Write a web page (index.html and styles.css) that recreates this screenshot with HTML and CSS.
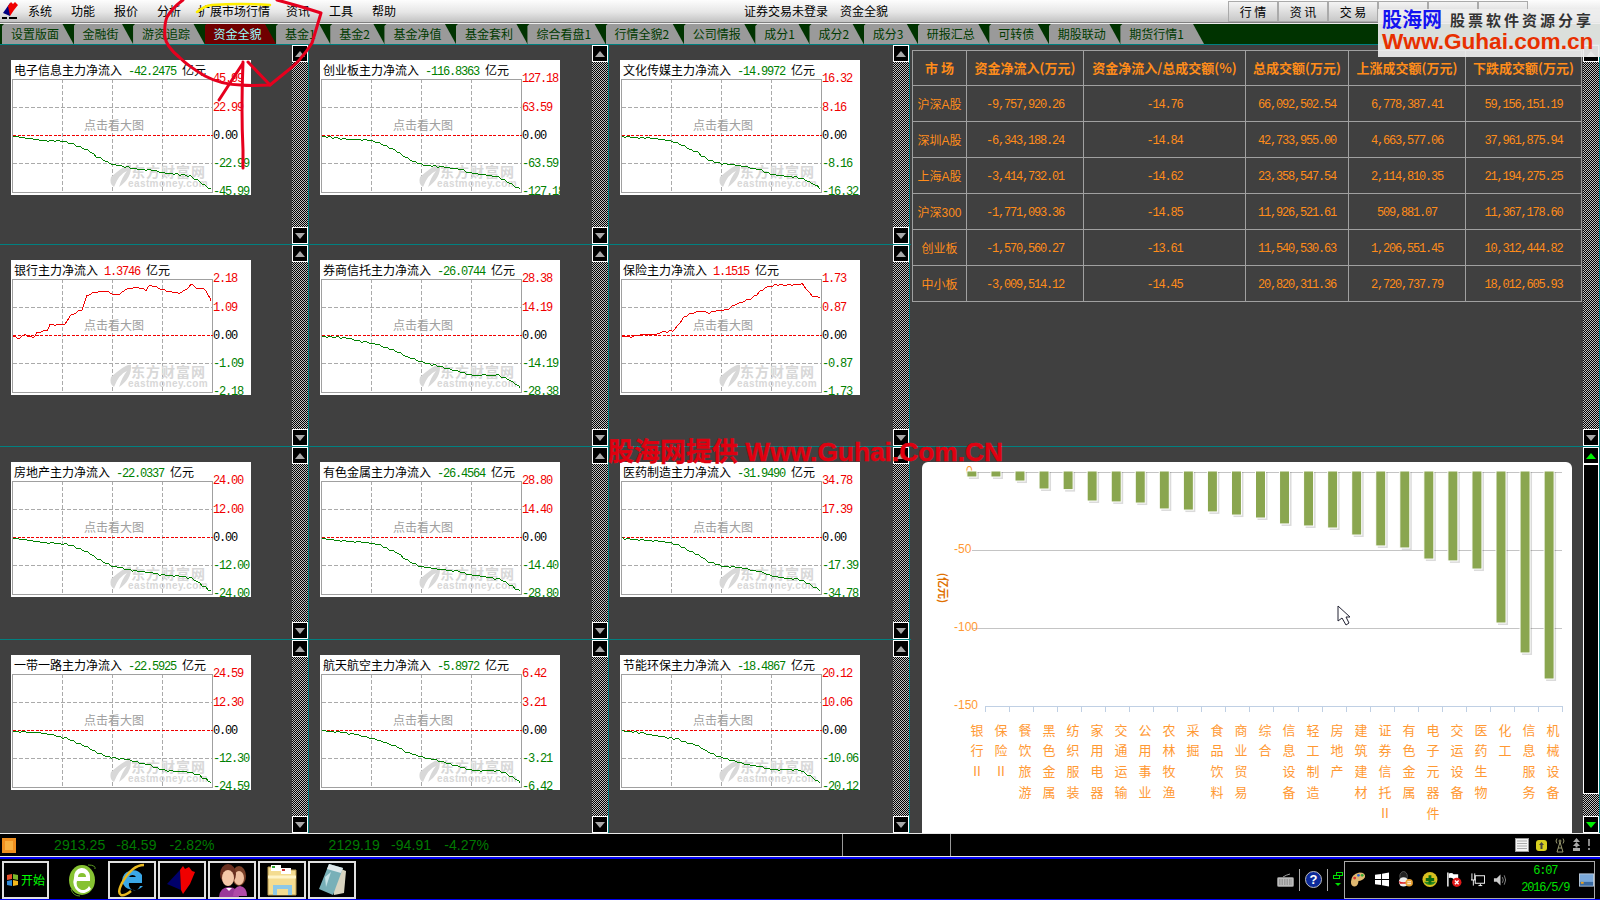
FILE: index.html
```html
<!DOCTYPE html>
<html lang="zh-CN">
<head>
    <meta charset="UTF-8">
    <title>资金全貌</title>
    <link rel="stylesheet" href="styles.css">
</head>
<body>
    <div class="menubar">
        <svg class="app-logo" width="18" height="20" viewBox="0 0 18 20">
            <path d="M9 2 L2 12 L9 15 Z" fill="#000080"/>
            <path d="M7 5 L10 1 L12 3 L14 1 L17 4 L13 9 L9 15 Z" fill="#f00000"/>
            <rect x="1" y="16" width="5" height="2" fill="#000"/>
            <rect x="8" y="16" width="8" height="2" fill="#000"/>
        </svg>
        <nav class="menu">
            <span>系统</span><span>功能</span><span>报价</span><span>分析</span><span class="menu-wide">扩展市场行情</span><span>资讯</span><span>工具</span><span>帮助</span>
        </nav>
        <div class="window-title"><span>证券交易未登录</span><span>资金全貌</span></div>
        <div class="top-buttons">
            <button>行 情</button><button>资 讯</button><button>交 易</button><button></button><button></button><button></button>
        </div>
    </div>

    <div class="tabbar">
        <span class="tab">设置版面</span>
        <span class="tab">金融街</span>
        <span class="tab">游资追踪</span>
        <span class="tab active">资金全貌</span>
        <span class="tab">基金1</span>
        <span class="tab">基金2</span>
        <span class="tab">基金净值</span>
        <span class="tab">基金套利</span>
        <span class="tab">综合看盘1</span>
        <span class="tab">行情全貌2</span>
        <span class="tab">公司情报</span>
        <span class="tab">成分1</span>
        <span class="tab">成分2</span>
        <span class="tab">成分3</span>
        <span class="tab">研报汇总</span>
        <span class="tab">可转债</span>
        <span class="tab">期股联动</span>
        <span class="tab tab-last">期货行情1</span>
    </div>

    <div class="main">
        <div class="panels" id="panels"></div>

        <div class="right">
            <div class="upper">
                <table class="market-table">
                    <thead>
                        <tr>
                            <th class="c1">市 场</th>
                            <th class="c2">资金净流入(万元)</th>
                            <th class="c3">资金净流入/总成交额(%)</th>
                            <th class="c4">总成交额(万元)</th>
                            <th class="c5">上涨成交额(万元)</th>
                            <th class="c6">下跌成交额(万元)</th>
                        </tr>
                    </thead>
                    <tbody>
                        <tr><td class="name">沪深A股</td><td>-9,757,920.26</td><td>-14.76</td><td>66,092,502.54</td><td>6,778,387.41</td><td>59,156,151.19</td></tr>
                        <tr><td class="name">深圳A股</td><td>-6,343,188.24</td><td>-14.84</td><td>42,733,955.00</td><td>4,663,577.06</td><td>37,961,875.94</td></tr>
                        <tr><td class="name">上海A股</td><td>-3,414,732.01</td><td>-14.62</td><td>23,358,547.54</td><td>2,114,810.35</td><td>21,194,275.25</td></tr>
                        <tr><td class="name">沪深300</td><td>-1,771,093.36</td><td>-14.85</td><td>11,926,521.61</td><td>509,881.07</td><td>11,367,178.60</td></tr>
                        <tr><td class="name">创业板</td><td>-1,570,560.27</td><td>-13.61</td><td>11,540,530.63</td><td>1,206,551.45</td><td>10,312,444.82</td></tr>
                        <tr><td class="name">中小板</td><td>-3,009,514.12</td><td>-14.45</td><td>20,820,311.36</td><td>2,720,737.79</td><td>18,012,605.93</td></tr>
                    </tbody>
                </table>
                <div class="scroll">
                    <div class="scroll-btn up"></div>
                    <div class="scroll-btn down"></div>
                </div>
            </div>
            <div class="lower">
                <div class="bar-chart">
                    <svg id="barChart" width="650" height="371" viewBox="922 462 650 371"></svg>
                </div>
                <div class="scroll scroll-green">
                    <div class="scroll-btn up"></div>
                    <div class="thumb"></div>
                    <div class="scroll-btn down"></div>
                </div>
            </div>
        </div>
    </div>

    <div class="statusbar">
        <span class="status-icon"></span>
        <span class="quote q1">2913.25</span><span class="quote q2">-84.59</span><span class="quote q3">-2.82%</span>
        <span class="quote q4">2129.19</span><span class="quote q2">-94.91</span><span class="quote q3">-4.27%</span>
        <span class="status-sep s1"></span>
        <span class="status-sep s2"></span>
        <div class="status-icons">
            <svg width="14" height="14" viewBox="0 0 14 14"><rect x="0.5" y="0.5" width="13" height="13" fill="#f4f4f4" stroke="#999"/><path d="M2 3h10M2 5.5h10M2 8h10M2 10.5h10" stroke="#aaa"/></svg>
            <svg width="13" height="13" viewBox="0 0 13 13"><rect x="1" y="1" width="11" height="11" rx="3" fill="#d8d020"/><path d="M6.500 3 L9 6 H7.500 V10 H5.500 V6 H4 Z" fill="#444"/></svg>
            <svg width="12" height="16" viewBox="0 0 12 16" fill="none" stroke="#9a9a70"><path d="M6 5 L3 15 H9 Z M4 11 H8"/><circle cx="6" cy="4" r="1"/><path d="M3 1.500 Q1 4 3 6.500 M9 1.500 Q11 4 9 6.500"/></svg>
            <svg width="9" height="14" viewBox="0 0 9 14"><path d="M4.500 0 L8 4 H1 Z M4.500 4 L8 8 H1 Z M3.500 8 H5.500 V9.500 H3.500 Z M1 10 H8 V13 H1 Z" fill="#aaa"/></svg>
            <svg width="4" height="14" viewBox="0 0 4 14"><path d="M1 1 H3 V8 H1 Z M1 10 H3 V12 H1 Z" fill="#888"/></svg>
        </div>
    </div>

    <div class="taskbar">
        <div class="task-btn start">
            <svg width="13" height="14" viewBox="0 0 13 14"><path d="M1 2 L6 1 V6 L1 7 Z" fill="#e8502a"/><path d="M7 1 L12 2 V7 L7 6 Z" fill="#7cb92c"/><path d="M1 8 L6 7 V13 L1 12 Z" fill="#2f8ad8"/><path d="M7 7 L12 8 V12 L7 13 Z" fill="#f4b81c"/></svg>
            <span>开始</span>
        </div>
        <div class="task-icon">
            <svg width="29" height="34" viewBox="0 0 29 34"><ellipse cx="14" cy="17" rx="13" ry="15" fill="#86c232"/><path d="M6 15 A8 9 0 0 1 22 13 V18 H9 A6 6 0 0 0 21 23 L23 26 A10 11 0 0 1 6 15 Z M10 14 H18 A4 4 0 0 0 10 14 Z" fill="#fff"/><path d="M20 2 Q28 2 27 6" stroke="#5a9a20" fill="none"/><path d="M3 26 Q5 33 12 33" stroke="#5a9a20" fill="none"/></svg>
        </div>
        <div class="task-btn">
            <svg width="32" height="34" viewBox="0 0 32 34"><path d="M6 18 A11 11 0 0 1 26 12 V20 H13 A5 5 0 0 0 24 23 H27 A12 11 0 0 1 6 18 Z M13 14 H20 A4 4 0 0 0 13 14 Z" fill="#3aa8e8"/><path d="M28 2 Q16 2 6 20 Q1 30 5 32 Q9 33 15 28" fill="none" stroke="#e8b820" stroke-width="2.500"/></svg>
        </div>
        <div class="task-btn">
            <svg width="34" height="32" viewBox="0 0 34 32"><path d="M15 6 L2 20 L16 26 Z" fill="#00006a"/><path d="M15 6 L18 2 L20 5 L24 3 L27 7 L30 8 L25 20 L18 30 L16 26 Z" fill="#f00000"/></svg>
        </div>
        <div class="task-btn">
            <svg width="34" height="34" viewBox="0 0 34 34"><path d="M4 34 Q5 24 14 24 Q23 24 24 34 Z" fill="#9a3a9a"/><path d="M18 33 Q19 23 25 23 Q32 24 32 33 Z" fill="#b04aa8"/><ellipse cx="24" cy="13" rx="7" ry="10" fill="#7a4028"/><ellipse cx="24" cy="15" rx="5" ry="7" fill="#f0c0a0"/><ellipse cx="13" cy="11" rx="8" ry="10" fill="#6a3020"/><ellipse cx="13" cy="15" rx="6" ry="8" fill="#f4c8a8"/><path d="M11 25 L14 28 L17 25 Z" fill="#fff"/></svg>
        </div>
        <div class="task-btn">
            <svg width="34" height="34" viewBox="0 0 34 34"><path d="M3 4 H14 L17 7 H31 V32 H3 Z" fill="#f4dc90" stroke="#b89a50"/><rect x="6" y="2" width="10" height="6" fill="#fff"/><rect x="7" y="3" width="3" height="2" fill="#3a3"/><rect x="16" y="5" width="10" height="6" fill="#fff"/><rect x="17" y="6" width="3" height="2" fill="#c33"/><path d="M8 22 H27 V32 H8 Z" fill="#8cc8e8"/><path d="M12 26 H23 V32 H12 Z" fill="#f4dc90"/><path d="M3 14 H31" stroke="#fff4c8" stroke-width="3"/></svg>
        </div>
        <div class="task-btn">
            <svg width="32" height="34" viewBox="0 0 32 34"><path d="M15 2 L30 8 L28 30 L18 32 Z" fill="#d8d4c0"/><path d="M13 1 L27 5 L17 32 L3 26 Z" fill="#78b0b8"/><path d="M13 1 L27 5 L25 10 L11 6 Z" fill="#dfe8ea"/><path d="M9 14 L15 9 L10 24 Z" fill="#c4e2e6"/></svg>
        </div>

        <div class="sys-area">
            <svg width="17" height="15" viewBox="0 0 17 15"><path d="M6 5 Q9 3 13 2" stroke="#999" fill="none"/><rect x="0.500" y="5.500" width="16" height="9" rx="1" fill="#bbb" stroke="#888"/><path d="M2 8h13M2 10h13M2 12h13" stroke="#777" stroke-dasharray="1.500 1"/></svg>
            <span class="sys-sep"></span>
            <svg width="17" height="17" viewBox="0 0 17 17"><circle cx="8.500" cy="8.500" r="8" fill="#0c2a9a" stroke="#bbb"/><text x="8.500" y="13" class="help-mark">?</text></svg>
            <span class="sys-sep"></span>
            <svg class="restore" width="10" height="15" viewBox="0 0 10 15" fill="none" stroke="#00e000"><rect x="0.500" y="3.500" width="6" height="3"/><rect x="3.500" y="0.500" width="6" height="3"/><path d="M2 11 H8 L5 14 Z" fill="#00e000" stroke="none"/></svg>
            <div class="tray">
                <svg width="17" height="17" viewBox="0 0 17 17"><path d="M1 11 Q1 3 10 1 Q17 1 16 6 Q13 10 9 10 Q9 15 5 16 Q1 16 1 11 Z" fill="#e0b870"/><circle cx="5" cy="7" r="1.500" fill="#d33"/><circle cx="9" cy="4" r="1.500" fill="#36c"/><circle cx="13" cy="4" r="1.500" fill="#3a3"/></svg>
                <svg width="15" height="15" viewBox="0 0 15 15"><path d="M0 2.500 L6.500 1.500 V7 H0 Z M7.500 1.300 L15 0 V7 H7.500 Z M0 8 H6.500 V13.500 L0 12.500 Z M7.500 8 H15 V15 L7.500 13.700 Z" fill="#fff"/></svg>
                <svg width="17" height="17" viewBox="0 0 17 17"><ellipse cx="7" cy="5" rx="4" ry="5" fill="#222" stroke="#555"/><ellipse cx="7" cy="11" rx="5" ry="5" fill="#eee"/><path d="M2 10 Q7 13 12 10 L11 13 H3 Z" fill="#d22"/><circle cx="13" cy="12" r="4" fill="#e8a030"/><path d="M11 11h4M11 13h4" stroke="#fff"/></svg>
                <svg width="17" height="17" viewBox="0 0 17 17"><circle cx="8.500" cy="8.500" r="8" fill="#d8c020"/><path d="M2 11 A8 8 0 0 0 15 11 Z" fill="#2a8a20"/><path d="M7 4 H10 V7 H13 V10 H10 V13 H7 V10 H4 V7 H7 Z" fill="#0a6a10"/></svg>
                <svg width="17" height="17" viewBox="0 0 17 17"><path d="M2 1 V16" stroke="#fff" stroke-width="1.500"/><path d="M3 2 Q7 1 8 3 H13 V8 H8 Q6 6 3 7 Z" fill="#fff"/><circle cx="11.500" cy="11.500" r="5" fill="#e01818"/><path d="M9.500 9.500 L13.500 13.500 M13.500 9.500 L9.500 13.500" stroke="#fff" stroke-width="1.500"/></svg>
                <svg width="15" height="15" viewBox="0 0 15 15"><rect x="4.500" y="3.500" width="10" height="8" fill="#000" stroke="#fff"/><path d="M8 14 H12 M10 12 V14" stroke="#fff"/><path d="M1 1 V8 M4 1 V8 M0 8 H5 M2.500 8 V14" stroke="#fff"/></svg>
                <svg width="14" height="14" viewBox="0 0 14 14"><path d="M1 5 H4 L8 1 V13 L4 9 H1 Z" fill="#ccc"/><path d="M10 4 Q12 7 10 10 M12 2 Q15 7 12 12" stroke="#888" fill="none"/></svg>
                <div class="clock"><span>6:07</span><span>2016/5/9</span></div>
                <svg class="desktop" width="16" height="14" viewBox="0 0 16 14"><rect x="0.500" y="0.500" width="15" height="13" fill="#7aa8d8" stroke="#bcd"/><rect x="1" y="9" width="14" height="4" fill="#3a6aa0"/><rect x="2" y="9" width="3" height="2" fill="#e8a020"/></svg>
            </div>
        </div>
    </div>

    <!-- marks and watermarks drawn over the captured window -->
    <div class="brand">
        <div class="brand-top"><span class="brand-name">股海网</span><span class="brand-slogan">股票软件资源分享</span></div>
        <div class="brand-url">Www.Guhai.com.cn</div>
    </div>
    <div class="stamp"><span class="stamp-cn">股海网提供</span> Www.Guhai.Com.CN</div>
    <svg class="scribble" width="1600" height="900" viewBox="0 0 1600 900" fill="none">
        <path class="red-ink" d="M277 0 Q300 6 321 13 M321 13 Q316 30 312 43 Q300 62 286 72 L270 85 Q250 86 241 85 Q222 85 205 76 Q188 66 179 57 Q166 46 165 37 Q164 24 167 17 Q172 8 183 0"/>
        <path class="red-ink" d="M248 62 L270 85 M243 62 Q241 110 243 150 L243 168 M219 100 L243 63"/>
        <path class="yellow-ink" d="M197 12 Q204 6 212 5 Q240 3 270 5"/>
        <path d="M1338 606 V621 L1342 618 L1346 625 L1349 623 L1346 617 L1350 617 Z" fill="#fff" stroke="#223" stroke-width="1"/>
    </svg>

    <script src="charts.js"></script>
</body>
</html>
```
FILE: styles.css
```css
/* Base */
* {
    box-sizing: border-box;
}

html, body {
    margin: 0;
    width: 1600px;
    height: 900px;
    overflow: hidden;
}

body {
    position: relative;
    background-color: #404040;
    font-family: "Noto Sans CJK SC", sans-serif;
    font-size: 12px;
    line-height: 1;
    color: #000;
}

/* Top menu */
.menubar {
    height: 24px;
    display: flex;
    align-items: flex-start;
    background: linear-gradient(#fdfdfd, #e6e6e6 50%, #c4c4c4 90%, #808080 92%, #808080 96%, #eee 96%);
}

.app-logo {
    margin: 1px 0 0 1px;
    flex: none;
}

.menu {
    display: flex;
    gap: 19px;
    margin: 5px 0 0 9px;
}

.menu-wide {
    margin: 0 -3px 0 -2px;
}

.window-title {
    position: absolute;
    left: 744px;
    top: 5px;
    display: flex;
    gap: 12px;
}

.top-buttons {
    margin-left: auto;
    display: flex;
    padding-right: 72px;
}

.top-buttons button {
    width: 50px;
    height: 21px;
    margin: 1px 0 0;
    padding: 0;
    border: 1px solid #aaa;
    background: linear-gradient(#f4f4f4, #c8c8c8);
    font: inherit;
}

/* Tabs */
.tabbar {
    height: 21px;
    display: flex;
    padding-left: 2px;
    background-color: #003300;
    border-bottom: 1px solid #008080;
}

.tab {
    padding: 4px 14.5px 0 9px;
    background-color: #9a9a9a;
    color: #003a00;
    clip-path: polygon(0 2px, 2px 0, calc(100% - 11px) 0, 100% 100%, 0 100%);
    white-space: nowrap;
}

.tab.active {
    background-color: #700000;
    color: #99ffff;
}

.tab-last {
    padding-right: 20px;
}

/* Main area */
.main {
    height: 788px;
    display: flex;
}

.panels {
    width: 911px;
    display: grid;
    grid-template-columns: 310px 300px 301px;
    grid-template-rows: 200px 202px 193px 193px;
}

.cell {
    display: flex;
    justify-content: space-between;
    padding: 0 1px 0 11px;
    border-bottom: 1px solid #008080;
}

.cell.col2,
.cell.col3 {
    padding-left: 10px;
}

.cell.last-row {
    border-bottom: none;
}

.card {
    width: 240px;
    height: 135px;
    margin-top: 15px;
    background-color: #fff;
}

.card svg {
    display: block;
}

/* Text inside the small charts */
.t-title {
    font-size: 12px;
    fill: #000;
}

.t-num {
    font-family: "Liberation Mono", monospace;
    font-size: 12px;
    letter-spacing: -1.2px;
}

.t-hint {
    font-size: 12px;
    fill: #a0a0a0;
    text-anchor: middle;
}

.t-logo-cn {
    font-size: 14px;
    font-weight: bold;
    letter-spacing: 1px;
    fill: #d8d8d8;
}

.t-logo-en {
    font-family: "Liberation Sans", sans-serif;
    font-size: 10px;
    font-weight: bold;
    letter-spacing: 0.4px;
    fill: #d8d8d8;
}

.up-color { fill: #f00000; }
.down-color { fill: #008000; }
.zero-color { fill: #000; }

/* Scrollbars */
.scroll {
    width: 17px;
    flex: none;
    display: flex;
    flex-direction: column;
    justify-content: space-between;
    background: repeating-conic-gradient(#000 0 25%, #c0c0c0 0 50%) 0 0 / 2px 2px;
    border-right: 1px solid #008080;
}

.scroll-btn {
    height: 17px;
    display: flex;
    align-items: center;
    justify-content: center;
    background-color: #000;
    border: 1px solid #fff;
}

.scroll-btn::before {
    content: "";
    border-left: 5px solid transparent;
    border-right: 5px solid transparent;
}

.scroll-btn.up::before {
    border-bottom: 6px solid #a8a8a8;
}

.scroll-btn.down::before {
    border-top: 6px solid #a8a8a8;
}

.scroll-green .scroll-btn.up::before {
    border-bottom-color: #00f000;
}

.scroll-green .scroll-btn.down::before {
    border-top-color: #00f000;
}

.thumb {
    height: 330px;
    margin-bottom: 22px;
    background-color: #000;
    border: 1px solid #fff;
}

/* Right side */
.right {
    flex: 1;
    display: flex;
    flex-direction: column;
}

.upper {
    height: 402px;
    display: flex;
    justify-content: space-between;
    padding-left: 1px;
    border-bottom: 1px solid #008080;
}

.market-table {
    width: 669px;
    height: 252px;
    margin-top: 5px;
    table-layout: fixed;
    border-collapse: collapse;
    color: #ff8c1a;
    text-align: center;
}

.market-table th,
.market-table td {
    border: 1px solid #a0a0a0;
    padding: 0;
    white-space: nowrap;
}

.market-table th {
    height: 35px;
    padding-bottom: 1px;
    font-size: 13px;
    font-weight: bold;
}

.market-table td {
    height: 36px;
    padding-top: 2px;
    font-family: "Liberation Mono", monospace;
    font-size: 12px;
    letter-spacing: -1.2px;
}

.market-table td.name {
    font-family: "Liberation Sans", "Noto Sans CJK SC", sans-serif;
    letter-spacing: 0;
}

.c1 { width: 54px; }
.c2 { width: 117px; }
.c3 { width: 162px; }
.c4 { width: 103px; }
.c5 { width: 117px; }
.c6 { width: 116px; }

.lower {
    flex: 1;
    display: flex;
    justify-content: space-between;
    padding-left: 11px;
}

.bar-chart {
    width: 650px;
    height: 371px;
    margin-top: 15px;
    background-color: #fff;
    border-radius: 6px 6px 0 0;
}

.bar-chart svg {
    display: block;
}

.b-tick {
    font-family: "Liberation Sans", sans-serif;
    font-size: 12px;
    fill: #ff9933;
}

.b-label {
    font-size: 13px;
    fill: #ff9933;
    text-anchor: middle;
}

.b-unit {
    font-size: 11px;
    font-weight: bold;
    fill: #e07000;
    text-anchor: middle;
}

/* Status bar */
.statusbar {
    position: relative;
    height: 24px;
    display: flex;
    align-items: center;
    background-color: #000;
    border-top: 1px solid #e8e8e8;
    border-bottom: 1px solid #e8e8e8;
    font-family: "Liberation Sans", sans-serif;
    font-size: 14px;
    letter-spacing: 0.1px;
    color: #007a00;
}

.status-icon {
    width: 14px;
    height: 15px;
    margin-left: 2px;
    background-color: #f8b040;
    border: 3px solid #f09020;
}

.quote.q1 { margin-left: 38px; }
.quote.q2 { margin-left: 11px; }
.quote.q3 { margin-left: 13px; }
.quote.q4 { margin-left: 114px; }

.status-sep {
    position: absolute;
    top: 0;
    bottom: 0;
    width: 1px;
    background-color: #999;
}

.s1 { left: 842px; }
.s2 { left: 950px; }

.status-icons {
    margin-left: auto;
    display: flex;
    align-items: center;
    gap: 6px;
    padding-right: 9px;
}

/* Task bar */
.taskbar {
    height: 43px;
    display: flex;
    align-items: center;
    gap: 2px;
    padding: 1px 0 0 2px;
    background-color: #000;
    border-top: 2px solid #0000f0;
    border-bottom: 1px solid #0000f0;
}

.task-btn {
    width: 48px;
    height: 38px;
    display: flex;
    align-items: center;
    justify-content: center;
    border: 2px solid #e0e0e0;
}

.task-btn.start {
    width: 47px;
    gap: 2px;
    color: #00ff00;
    font-size: 12px;
}

.task-icon {
    margin: 0 9px 0 17px;
    display: flex;
}

.sys-area {
    margin-left: auto;
    display: flex;
    align-items: center;
    margin-right: 5px;
}

.sys-sep {
    width: 1px;
    height: 22px;
    margin: 0 5px;
    background-color: #aaa;
}

.restore {
    margin-right: 1px;
}

.help-mark {
    font-family: "Liberation Sans", sans-serif;
    font-size: 13px;
    font-weight: bold;
    fill: #fff;
    text-anchor: middle;
}

.tray {
    width: 251px;
    height: 38px;
    display: flex;
    align-items: center;
    gap: 8.6px;
    padding: 0 0 0 5px;
    border: 1px solid #aaa;
}

.clock {
    width: 56px;
    margin-left: 4px;
    display: flex;
    flex-direction: column;
    align-items: center;
    gap: 5px;
    font-family: "Liberation Mono", monospace;
    font-size: 12px;
    letter-spacing: -1.2px;
    color: #00e000;
}

.desktop {
    margin-left: -1px;
}

/* Overlays */
.brand {
    position: absolute;
    left: 1378px;
    top: 9px;
    width: 222px;
    height: 48px;
    padding: 0 4px;
    background-color: rgba(238, 238, 238, 0.92);
}

.brand-top {
    display: flex;
    align-items: center;
    height: 20px;
}

.brand-name {
    font-size: 20px;
    font-weight: bold;
    color: #1414f0;
}

.brand-slogan {
    margin-left: 8px;
    font-size: 15px;
    font-weight: bold;
    letter-spacing: 3px;
    color: #333;
    white-space: nowrap;
}

.brand-url {
    margin-top: 2px;
    font-family: "Liberation Sans", sans-serif;
    font-size: 22.6px;
    font-weight: bold;
    color: #e83000;
    white-space: nowrap;
}

.stamp {
    position: absolute;
    left: 608px;
    top: 437px;
    font-family: "Liberation Sans", sans-serif;
    font-size: 26.3px;
    font-weight: bold;
    color: #e00010;
    -webkit-text-stroke: 0.4px #e00010;
    white-space: nowrap;
}

.stamp-cn {
    font-family: "Noto Sans CJK SC", sans-serif;
    font-size: 26px;
}

.scribble {
    position: absolute;
    left: 0;
    top: 0;
    pointer-events: none;
}

.red-ink {
    stroke: #e6001e;
    stroke-width: 3;
    stroke-linecap: round;
}

.yellow-ink {
    stroke: #ffee00;
    stroke-width: 2.5;
    stroke-linecap: round;
}
```
FILE: charts.js
```js
// Small main-force flow charts and the sector bar chart

// common falling curve, in card pixels
const fallCurve = [[2,76],[22,78],[39,80],[57,83],[69,88],[77,91],[86,97],[101,103],[122,107],[142,111],[152,114],[179,116],[189,121],[200,128]];
const bankCurve = [[2,75],[7,79],[14,75],[22,78],[26,74],[36,71],[39,65],[54,64],[59,55],[71,48],[76,35],[81,32],[89,31],[97,32],[102,35],[109,35],[114,31],[126,28],[135,30],[139,25],[151,28],[167,32],[174,30],[181,24],[186,29],[191,28],[197,35],[200,41]];
const insuranceCurve = [[2,76],[12,77],[23,74],[37,73],[40,71],[53,70],[58,65],[63,58],[70,54],[80,52],[90,54],[98,51],[107,50],[115,44],[133,36],[145,27],[157,25],[167,26],[182,25],[192,36],[200,38]];

const cards = [
    { name: '电子信息主力净流入', value: '-42.2475', top: '45.99', mid: '22.99' },
    { name: '创业板主力净流入', value: '-116.8363', top: '127.18', mid: '63.59' },
    { name: '文化传媒主力净流入', value: '-14.9972', top: '16.32', mid: '8.16' },
    { name: '银行主力净流入', value: '1.3746', top: '2.18', mid: '1.09', curve: bankCurve },
    { name: '券商信托主力净流入', value: '-26.0744', top: '28.38', mid: '14.19' },
    { name: '保险主力净流入', value: '1.1515', top: '1.73', mid: '0.87', curve: insuranceCurve },
    { name: '房地产主力净流入', value: '-22.0337', top: '24.00', mid: '12.00' },
    { name: '有色金属主力净流入', value: '-26.4564', top: '28.80', mid: '14.40' },
    { name: '医药制造主力净流入', value: '-31.9490', top: '34.78', mid: '17.39' },
    { name: '一带一路主力净流入', value: '-22.5925', top: '24.59', mid: '12.30' },
    { name: '航天航空主力净流入', value: '-5.8972', top: '6.42', mid: '3.21' },
    { name: '节能环保主力净流入', value: '-18.4867', top: '20.12', mid: '10.06' }
];

// fill in the curve every 2px with a small wobble so each card's line differs
function linePoints(curve, seed) {
    const pts = [];
    for (let i = 0; i < curve.length - 1; i++) {
        const a = curve[i];
        const b = curve[i + 1];
        for (let x = a[0]; x < b[0]; x += 2) {
            const y = a[1] + (b[1] - a[1]) * (x - a[0]) / (b[0] - a[0]);
            const wobble = Math.sin(x * 0.9 + seed * 2) * 0.7 + Math.sin(x * 0.07 + seed) * 1.2 * Math.min(1, (x - 2) / 30);
            pts.push(x + ',' + Math.round(y + wobble));
        }
    }
    const last = curve[curve.length - 1];
    pts.push(last[0] + ',' + last[1]);
    return pts.join(' ');
}

function cardSvg(card, index) {
    const curve = card.curve || fallCurve;
    const rising = !card.value.startsWith('-');
    const lineColor = rising ? '#f00000' : '#008000';
    const valueClass = rising ? 'up-color' : 'down-color';
    const nameWidth = card.name.length * 12;
    const dash = 'stroke="#aaa" stroke-dasharray="4 2" shape-rendering="crispEdges"';

    return `<svg width="240" height="135" viewBox="0 0 240 135">
        <path d="M1.500 47.500H201M1.500 103.500H201M51.500 19V132M101.500 19V132M151.500 19V132" ${dash}/>
        <rect x="1.500" y="19.500" width="200" height="113" fill="none" stroke="#a0a0a0" shape-rendering="crispEdges"/>
        <path d="M100 117 Q116 103 120 105 Q121 118 108 127 Q111 117 116 111 Q108 114 103 127 Q98 124 100 117 Z" fill="#d8d8d8"/>
        <text x="120" y="117" class="t-logo-cn">东方财富网</text>
        <text x="117" y="127" class="t-logo-en">eastmoney.com</text>
        <text x="103" y="70" class="t-hint">点击看大图</text>
        <path d="M2 75.500H202" stroke="#f00000" stroke-dasharray="3 1.500" shape-rendering="crispEdges"/>
        <polyline points="${linePoints(curve, index)}" fill="none" stroke="${lineColor}" shape-rendering="crispEdges"/>
        <text x="3" y="15" class="t-title">${card.name}</text>
        <text x="${nameWidth + 9}" y="15" class="t-num ${valueClass}">${card.value}</text>
        <text x="${nameWidth + 9 + card.value.length * 6 + 6}" y="15" class="t-title">亿元</text>
        <text x="202" y="22" class="t-num up-color">${card.top}</text>
        <text x="202" y="51" class="t-num up-color">${card.mid}</text>
        <text x="202" y="79" class="t-num zero-color">0.00</text>
        <text x="202" y="107" class="t-num down-color">-${card.mid}</text>
        <text x="202" y="135" class="t-num down-color">-${card.top}</text>
    </svg>`;
}

const panels = document.getElementById('panels');
panels.innerHTML = cards.map(function(card, i) {
    let cls = 'cell';
    if (i % 3 === 1) cls += ' col2';
    if (i % 3 === 2) cls += ' col3';
    if (i >= 9) cls += ' last-row';
    return `<div class="${cls}">
        <div class="card">${cardSvg(card, i)}</div>
        <div class="scroll"><div class="scroll-btn up"></div><div class="scroll-btn down"></div></div>
    </div>`;
}).join('');

// Sector bar chart, drawn in page coordinates through the viewBox
const sectors = [
    ['银行Ⅱ', 3.2], ['保险Ⅱ', 3.2], ['餐饮旅游', 5.8], ['黑色金属', 10.9], ['纺织服装', 11.3],
    ['家用电器', 18.6], ['交通运输', 19.2], ['公用事业', 19.9], ['农林牧渔', 23.7], ['采掘', 24.4],
    ['食品饮料', 25.6], ['商业贸易', 27.6], ['综合', 29.5], ['信息设备', 33.3], ['轻工制造', 34.6],
    ['房地产', 35.9], ['建筑建材', 40.4], ['证券信托Ⅱ', 47.4], ['有色金属', 48.7], ['电子元器件', 55.8],
    ['交运设备', 57.0], ['医药生物', 62.2], ['化工', 96.8], ['信息服务', 116.0], ['机械设备', 132.7]
];

let bars = '';
[[472, '0', 966], [550, '-50', 954], [628, '-100', 954], [706, '-150', 954]].forEach(function(t) {
    if (t[0] < 706) {
        bars += `<path d="M972 ${t[0] + 0.5}H1562" stroke="#c4c4c4"/>`;
    }
    bars += `<text x="${t[2]}" y="${t[0] + 3}" class="b-tick">${t[1]}</text>`;
});

bars += '<path d="M985 706.500H1562" stroke="#c0d0e4"/>';
for (let i = 0; i <= 24; i++) {
    const x = Math.round(985 + i * 24.04) + 0.5;
    bars += `<path d="M${x} 706V712" stroke="#c0d0e4"/>`;
}

sectors.forEach(function(s, i) {
    const cx = 971.9 + i * 24.05;
    const h = s[1] * 1.56;
    bars += `<rect x="${cx - 3}" y="472" width="10" height="${h + 2}" fill="#000" opacity="0.14"/>`;
    bars += `<rect x="${cx - 5}" y="471" width="10" height="${h + 1}" fill="#8aa64f" stroke="#fff"/>`;
    Array.from(s[0]).forEach(function(ch, j) {
        bars += `<text x="${977 + i * 24}" y="${734.5 + j * 20.8}" class="b-label">${ch}</text>`;
    });
});

bars += '<text transform="translate(939 588) rotate(90)" class="b-unit">(亿元)</text>';
document.getElementById('barChart').innerHTML = bars;
```
